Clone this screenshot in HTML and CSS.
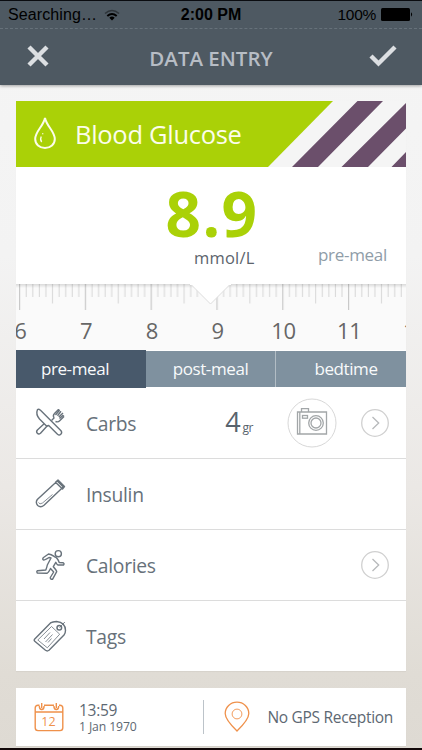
FILE: index.html
```
<!DOCTYPE html>
<html lang="en">
  <head>
    <meta charset="UTF-8" />
    <meta name="viewport" content="width=device-width, initial-scale=1.0" />
    <title>Data Entry</title>
    <link rel="stylesheet" href="styles.css">
  </head>
  <body>
    <div class="screen">
      <header class="top">
        <div class="status-bar">
          <div class="network">
            <span>Searching…</span>
            <svg width="16" height="12" viewBox="0 0 16 12">
              <path d="M1 4.5Q8 -1.5 15 4.5" fill="none" stroke="#2e3439" stroke-width="1.6" />
              <path d="M3.3 7Q8 3 12.7 7" fill="none" stroke="#000" stroke-width="2" />
              <path d="M5.3 8.7Q8 6.5 10.7 8.7L8 11.5Z" fill="#000" />
            </svg>
          </div>
          <span class="clock">2:00 PM</span>
          <div class="battery">
            <span>100%</span>
            <svg width="33" height="13" viewBox="0 0 33 13">
              <rect width="29" height="13" rx="1.5" />
              <path d="M30 4.3Q32.3 6.5 30 8.7Z" />
            </svg>
          </div>
        </div>
        <nav class="nav-bar">
          <svg class="close" width="22" height="22" viewBox="0 0 22 22">
            <path d="M2 2L20 20M20 2L2 20" />
          </svg>
          <h1>DATA ENTRY</h1>
          <svg class="confirm" width="28" height="22" viewBox="0 0 28 22">
            <path d="M2 11L9.500 18.500L26 2" />
          </svg>
        </nav>
      </header>

      <main class="content">
        <section class="card">
          <div class="banner">
            <svg class="banner-shape" width="390" height="66" viewBox="0 0 390 66">
              <path d="M0 0H317L252 66H0Z" fill="#aad107" />
              <path d="M341.500 0H367L302 66H276ZM390 2V27.500L352 66H325.500ZM390 51V66H375.500Z" fill="#6b4f6b" />
            </svg>
            <svg class="drop" width="24" height="34" viewBox="0 0 24 34">
              <path d="M12 2C10.500 10 2.200 15.500 2.200 23C2.200 28.500 6.500 32 12 32S21.800 28.500 21.800 23C21.800 15.500 13.500 10 12 2Z" stroke-width="2" />
              <path d="M8.300 20.500C7.300 22.500 7.400 24.500 8.700 26M10 17.300L9.500 18.300" stroke-width="1.300" />
            </svg>
            <h2>Blood Glucose</h2>
          </div>

          <div class="reading">
            <div class="value">8.9</div>
            <div class="unit">mmol/L</div>
            <div class="moment">pre-meal</div>
          </div>

          <div class="ruler">
            <svg class="ticks" width="390" height="28" viewBox="0 0 390 28">
              <defs>
                <pattern id="scale" x="3" y="0" width="65.800" height="28" patternUnits="userSpaceOnUse">
                  <path d="M.6 0V26" stroke="#c9c9c9" stroke-width="1.200" />
                  <path d="M7.200 0V13M13.800 0V13M20.300 0V13M26.900 0V13M40.100 0V13M46.700 0V13M53.200 0V13M59.800 0V13M33.500 0V19.500" stroke="#d6d6d6" />
                </pattern>
                <linearGradient id="edge" x1="0" y1="0" x2="0" y2="1">
                  <stop offset="0" stop-color="#000" stop-opacity=".13" />
                  <stop offset="1" stop-color="#000" stop-opacity="0" />
                </linearGradient>
              </defs>
              <rect width="390" height="28" fill="url(#scale)" />
              <rect width="390" height="4" fill="url(#edge)" />
              <path d="M174.500 0L194.500 20L214.500 0" fill="#fff" stroke="#dedede" />
              <path d="M174 0H215" stroke="#fff" stroke-width="2" />
            </svg>
            <div class="numbers">
              <span>6</span><span>7</span><span>8</span><span>9</span><span>10</span><span>11</span><span>12</span>
            </div>
          </div>

          <div class="tabs">
            <div class="tab active">pre-meal</div>
            <div class="tab">post-meal</div>
            <div class="tab">bedtime</div>
          </div>

          <div class="row">
            <svg class="icon" width="34" height="34" viewBox="0 0 34 34">
              <path d="M15 19L7.500 27.200Q5.700 28.600 4.300 27.200T4.400 24L12.500 16.500M18.500 14.500L21 12Q19.500 9.500 21.500 7.600L25.500 3.500M22.500 15.500Q25 16.500 26.700 14.700L31 10.500M25.500 3.500L26.300 4.600L22.500 9M28 5.200L24.500 9.700M30 7L25.800 11M31 10.500L29.900 9.500L26.500 12.500" />
              <path d="M4.500 3.500Q2.500 8.500 6.500 13L13.500 20L15.700 19.500L24.500 28.200Q26.200 29.600 27.800 28.200T28 24.700L7.500 4.200Q5.700 2.700 4.500 3.500Z" fill="#fff" />
            </svg>
            <span class="label">Carbs</span>
            <div class="amount">4<small>gr</small></div>
            <svg class="camera" width="50" height="50" viewBox="0 0 50 50">
              <circle cx="25" cy="25" r="24" stroke="#d8d8d8" fill="#fff" />
              <g stroke="#a2a6a8" stroke-width="1.300">
                <path d="M10.500 14H39.500V36H10.500ZM12.800 14V36M14.500 14V10.700H21.500V14" />
                <rect x="15.500" y="17.500" width="5" height="2.700" />
                <circle cx="29" cy="25" r="7.300" />
                <circle cx="29" cy="25" r="5" />
              </g>
            </svg>
            <svg class="more" width="28" height="28" viewBox="0 0 28 28">
              <circle cx="14" cy="14" r="13.300" />
              <path d="M11.500 8L17.700 14L11.500 20" />
            </svg>
          </div>

          <div class="row">
            <svg class="icon" width="34" height="34" viewBox="0 0 34 34">
              <path d="M23.500 4.800L4.300 22.500Q2.200 25.700 4.700 28.400Q7.600 31 11 28.300L29.700 10.500M22.500 5.200L25 3L31.500 9.500L29.500 12ZM24.300 4L30.800 10.500" />
              <path d="M5.500 25.500Q6.500 28 9.500 26L19.500 17.500" stroke-width=".8" />
            </svg>
            <span class="label">Insulin</span>
          </div>

          <div class="row">
            <svg class="icon" width="34" height="34" viewBox="0 0 34 34">
              <circle cx="25.300" cy="5.700" r="3.100" />
              <path d="M21.500 8.700Q18 6.300 15.500 6L10.500 9.500Q9 11.200 10.500 12Q11.500 12.300 16 9.500L18 10L14.300 17Q14 19 12.800 22L4.500 22.700Q3.200 23.500 4.300 25L14 25.200Q15.500 24.800 17.500 20.500L20.700 24L17.300 29.500Q17.200 31.500 19.500 31.300L23.700 23.700Q23.700 22.500 20.300 18.700L22.800 14.300Q24 16.800 25 17H30.500Q31.700 15.500 30.300 14.800L26.200 14.500Q24.500 9.500 21.500 8.700Z" />
            </svg>
            <span class="label">Calories</span>
            <svg class="more" width="28" height="28" viewBox="0 0 28 28">
              <circle cx="14" cy="14" r="13.300" />
              <path d="M11.500 8L17.700 14L11.500 20" />
            </svg>
          </div>

          <div class="row">
            <svg class="icon" width="34" height="34" viewBox="0 0 34 34">
              <path d="M1.500 20.300L17.500 3.900Q19.500 2.700 23.500 2.500Q32.500 3.500 32.500 11.500Q32.500 14 31 16L16 31.300Q14.200 32.600 12.500 31.300L1.800 22.300Q.8 21.300 1.500 20.300Z" />
              <path d="M4.800 21L18.500 7.500L26.700 15.200L14.300 28.800ZM11 20L17 13.500M12.500 23L19.500 15.500M15 23.500L18.500 19.500" stroke-width=".8" />
              <circle cx="26.300" cy="8.700" r="2.300" stroke-width="1.500" />
              <path d="M26.500 8.500Q29 6.500 31.800 3" stroke-width=".9" />
            </svg>
            <span class="label">Tags</span>
          </div>
        </section>

        <section class="card footer">
          <svg class="calendar" width="30" height="30" viewBox="0 0 30 30">
            <path d="M5.500 3.300H4Q1.200 3.300 1.200 6V25.800Q1.200 28.600 4 28.600H26Q28.800 28.600 28.800 25.800V6Q28.800 3.300 26 3.300H25M10 3.300H20M1.200 10H28.800" />
            <path d="M7.700 1V6M22.300 1V6M5.300 4Q5.300 7.500 7.700 7.500T10.100 4M19.900 4Q19.900 7.500 22.300 7.500T24.700 4" />
            <text x="14.500" y="24" text-anchor="middle">12</text>
          </svg>
          <div class="date">
            <div class="time">13:59</div>
            <div class="day">1 Jan 1970</div>
          </div>
          <svg class="pin" width="26" height="32" viewBox="0 0 26 32">
            <path d="M13 30Q1.200 18.500 1.200 12.500A11.800 11.300 0 0 1 24.800 12.500Q24.800 18.500 13 30Z" stroke-width="1.300" />
            <circle cx="13" cy="13" r="4.900" stroke-width=".9" />
          </svg>
          <span class="gps">No GPS Reception</span>
        </section>
      </main>
    </div>
  </body>
</html>
```
FILE: styles.css
```
* {
  margin: 0;
  padding: 0;
  box-sizing: border-box;
}

body {
  font-family: "Open Sans", "Noto Sans", sans-serif;
  width: 422px;
  height: 750px;
  overflow: hidden;
}

svg {
  display: block;
  flex-shrink: 0;
}

.screen {
  height: 750px;
  border-top: 1px solid #0b0d12;
  border-bottom: 2px solid #120809;
  background: linear-gradient(#f5f5f5 0, #f3f3f3 34%, #ebe8e5 65%, #e0dcd5 90%, #dedad3 100%);
}

.top {
  height: 84px;
  background-color: #4e5962;
  box-shadow: 0 1px 3px rgba(0, 0, 0, 0.35);
}

.status-bar {
  display: grid;
  grid-template-columns: 1fr auto 1fr;
  align-items: center;
  height: 28px;
  padding: 0 8px;
  border-bottom: 1px dashed #66717a;
  font-family: "Liberation Sans", Arial, sans-serif;
  font-size: 16px;
  color: #000;
}

.network {
  display: flex;
  align-items: center;
  gap: 7px;
  letter-spacing: 0.1px;
}

.clock {
  font-weight: bold;
}

.battery {
  display: flex;
  justify-content: flex-end;
  align-items: center;
  gap: 5px;
  font-size: 15.5px;
  letter-spacing: -0.3px;
}

.nav-bar {
  display: flex;
  align-items: center;
  justify-content: space-between;
  height: 56px;
  padding: 0 25px 2px 27px;
}

.nav-bar h1 {
  font-size: 20.5px;
  font-weight: 600;
  line-height: 28px;
  padding-top: 3px;
  padding-left: 4px;
  color: #b7bdc5;
}

.close path,
.confirm path {
  fill: none;
  stroke: #dcdfe2;
  stroke-width: 4.4;
}

.content {
  padding: 16px 16px 0;
}

.card {
  background-color: #fff;
  box-shadow: 0 1px 1px rgba(0, 0, 0, 0.04);
}

.banner {
  display: flex;
  align-items: center;
  height: 66px;
  padding-left: 17px;
  gap: 18px;
  background-color: #f5f5f5;
  position: relative;
}

.banner-shape {
  position: absolute;
  top: 0;
  left: 0;
}

.drop {
  position: relative;
  margin-top: -3px;
  fill: none;
  stroke: #fcfdea;
}

.banner h2 {
  position: relative;
  padding-bottom: 1px;
  font-size: 25.5px;
  font-weight: 500;
  letter-spacing: -0.3px;
  color: #fcfdea;
}

.reading {
  display: grid;
  grid-template-columns: 1fr 1fr;
  grid-template-rows: 75px 42px;
  height: 117px;
}

.value {
  grid-column: 1 / 3;
  padding-top: 3px;
  padding-left: 2px;
  text-align: center;
  font-size: 62px;
  font-weight: 700;
  line-height: 86px;
  letter-spacing: 1.5px;
  color: #aad107;
}

.unit {
  padding-left: 178px;
  padding-top: 4px;
  font-size: 16.5px;
  line-height: 24px;
  letter-spacing: 0.2px;
  color: #5c646c;
}

.moment {
  padding-top: 1px;
  padding-right: 19px;
  text-align: right;
  font-size: 17px;
  line-height: 24px;
  letter-spacing: -0.3px;
  color: #909da8;
}

.ruler {
  height: 66px;
  overflow: hidden;
  background-color: #fafafa;
}

.numbers {
  display: flex;
  margin-left: -28.7px;
}

.numbers span {
  flex: 0 0 65.8px;
  text-align: center;
  font-size: 22px;
  font-weight: 500;
  line-height: 36px;
  letter-spacing: -0.5px;
  color: #666;
}

.tabs {
  display: grid;
  grid-template-columns: 130px 130px 130px;
  align-items: center;
  height: 38px;
}

.tab {
  height: 36px;
  border-right: 1px solid #b2bdc5;
  background-color: #7f919f;
  text-align: center;
  font-size: 17px;
  font-weight: 500;
  line-height: 36px;
  letter-spacing: -0.4px;
  color: #f8fafb;
}

.tab:last-child {
  border-right: none;
  padding-left: 10px;
}

.tab.active {
  height: 38px;
  border: none;
  background-color: #48596b;
  line-height: 38px;
  padding-right: 12px;
}

.row {
  display: flex;
  align-items: center;
  height: 71px;
  padding: 0 17px;
  border-bottom: 1px solid #dcdcdc;
}

.row:last-child {
  height: 70px;
  border-bottom: none;
}

.icon {
  fill: none;
  stroke: #68727b;
  stroke-width: 1.4;
  stroke-linejoin: round;
}

.label {
  flex: 1;
  padding-left: 19px;
  font-size: 19.3px;
  font-weight: 500;
  letter-spacing: -0.3px;
  color: #67717a;
}

.amount {
  margin-right: 34px;
  padding-top: 3px;
  font-size: 27px;
  font-weight: 500;
  line-height: 36px;
  color: #58636d;
}

.amount small {
  margin-left: 2px;
  font-size: 12px;
  letter-spacing: -0.5px;
}

.camera {
  margin-right: 24px;
  fill: none;
}

.more {
  fill: none;
  stroke: #d0d0d0;
  stroke-width: 1.3;
}

.more path {
  stroke: #b7b9bb;
}

.footer {
  display: flex;
  align-items: center;
  height: 58px;
  margin-top: 17px;
  padding: 0 13px 0 18px;
}

.calendar {
  fill: none;
  stroke: #ef914b;
  stroke-width: 1.4;
}

.calendar text {
  fill: #ef914b;
  stroke: none;
  font-size: 12.5px;
  font-weight: 500;
}

.date {
  width: 140px;
  height: 34px;
  padding-left: 15px;
  border-right: 1px solid #bcc3c9;
  font-weight: 500;
  color: #5d6872;
}

.time {
  font-size: 15.5px;
  line-height: 18px;
  padding-top: 1px;
  letter-spacing: -0.3px;
}

.day {
  font-size: 12.2px;
  line-height: 15px;
  letter-spacing: -0.1px;
}

.pin {
  margin-left: 20px;
  fill: none;
  stroke: #ef914b;
}

.gps {
  flex: 1;
  text-align: right;
  font-size: 15.5px;
  font-weight: 500;
  letter-spacing: -0.3px;
  color: #5d6872;
}
```
